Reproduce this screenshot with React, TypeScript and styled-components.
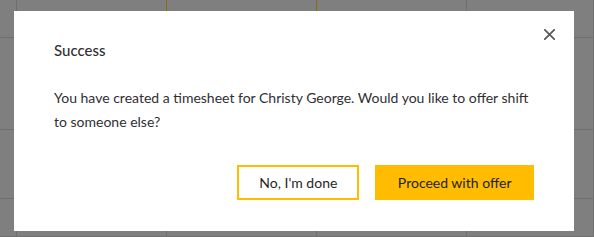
import React from "react";
import styled, { createGlobalStyle } from "styled-components";

const Global = createGlobalStyle`
  html, body { margin: 0; padding: 0; }
  body {
    width: 594px;
    height: 237px;
    overflow: hidden;
    font-family: Lato, "Open Sans", Arial, sans-serif;
    background: #7f7f7f;
  }
`;

const Page = styled.div`
  position: relative;
  width: 594px;
  height: 237px;
  overflow: hidden;
`;

const Calendar = styled.div`
  display: grid;
  grid-template-columns: 17px 150px 150px 150px 1fr;
  grid-template-rows: 38px 92px 69px 1fr;
  width: 100%;
  height: 100%;
  background: #7f7f7f;
`;

const Cell = styled.div<{ $today?: boolean }>`
  box-sizing: border-box;
  border-right: 1px solid ${(p) => (p.$today ? "#8c6a0c" : "#6f6f6f")};
  border-bottom: 1px solid #6f6f6f;
`;

const Modal = styled.div`
  position: absolute;
  left: 14px;
  top: 11px;
  width: 560px;
  height: 220px;
  box-sizing: border-box;
  background: #fff;
  padding: 30px 40px 31px;
  display: flex;
  flex-direction: column;
`;

const Title = styled.h2`
  margin: 0;
  font-size: 15px;
  line-height: 18px;
  font-weight: 500;
  color: #2f2f33;
`;

const Body = styled.p`
  margin: 27px 0 0;
  font-size: 14px;
  line-height: 24px;
  color: #2f2f33;
`;

const Actions = styled.div`
  margin-top: auto;
  display: flex;
  justify-content: flex-end;
  gap: 16px;
`;

const Button = styled.button<{ $primary?: boolean }>`
  height: 35px;
  box-sizing: border-box;
  font-family: Lato, "Open Sans", Arial, sans-serif;
  font-size: 14px;
  color: #1f1f23;
  cursor: pointer;
  border-radius: 0;
  border: 2px solid #ffbc00;
  background: ${(p) => (p.$primary ? "#ffbc00" : "#fff")};
  padding: ${(p) => (p.$primary ? "0 20.5px" : "0 20px")};
`;

const Close = styled.button`
  position: absolute;
  top: 16px;
  right: 17px;
  width: 15px;
  height: 15px;
  padding: 2px;
  border: none;
  background: transparent;
  cursor: pointer;
  display: flex;
`;

export default function App() {
  const cells = Array.from({ length: 20 }, (_, i) => i);
  return (
    <>
      <Global />
      <Page>
        <Calendar>
          {cells.map((i) => (
            <Cell key={i} $today={i === 1 || i === 2} />
          ))}
        </Calendar>
        <Modal role="dialog">
          <Close aria-label="Close">
            <svg width="11" height="11" viewBox="0 0 11 11">
              <path d="M0.8 0.8 L10.2 10.2 M10.2 0.8 L0.8 10.2" stroke="#555" strokeWidth="1.7" strokeLinecap="square" />
            </svg>
          </Close>
          <Title>Success</Title>
          <Body>
            You have created a timesheet for Christy George. Would you like to offer shift to someone else?
          </Body>
          <Actions>
            <Button>No, I'm done</Button>
            <Button $primary>Proceed with offer</Button>
          </Actions>
        </Modal>
      </Page>
    </>
  );
}
